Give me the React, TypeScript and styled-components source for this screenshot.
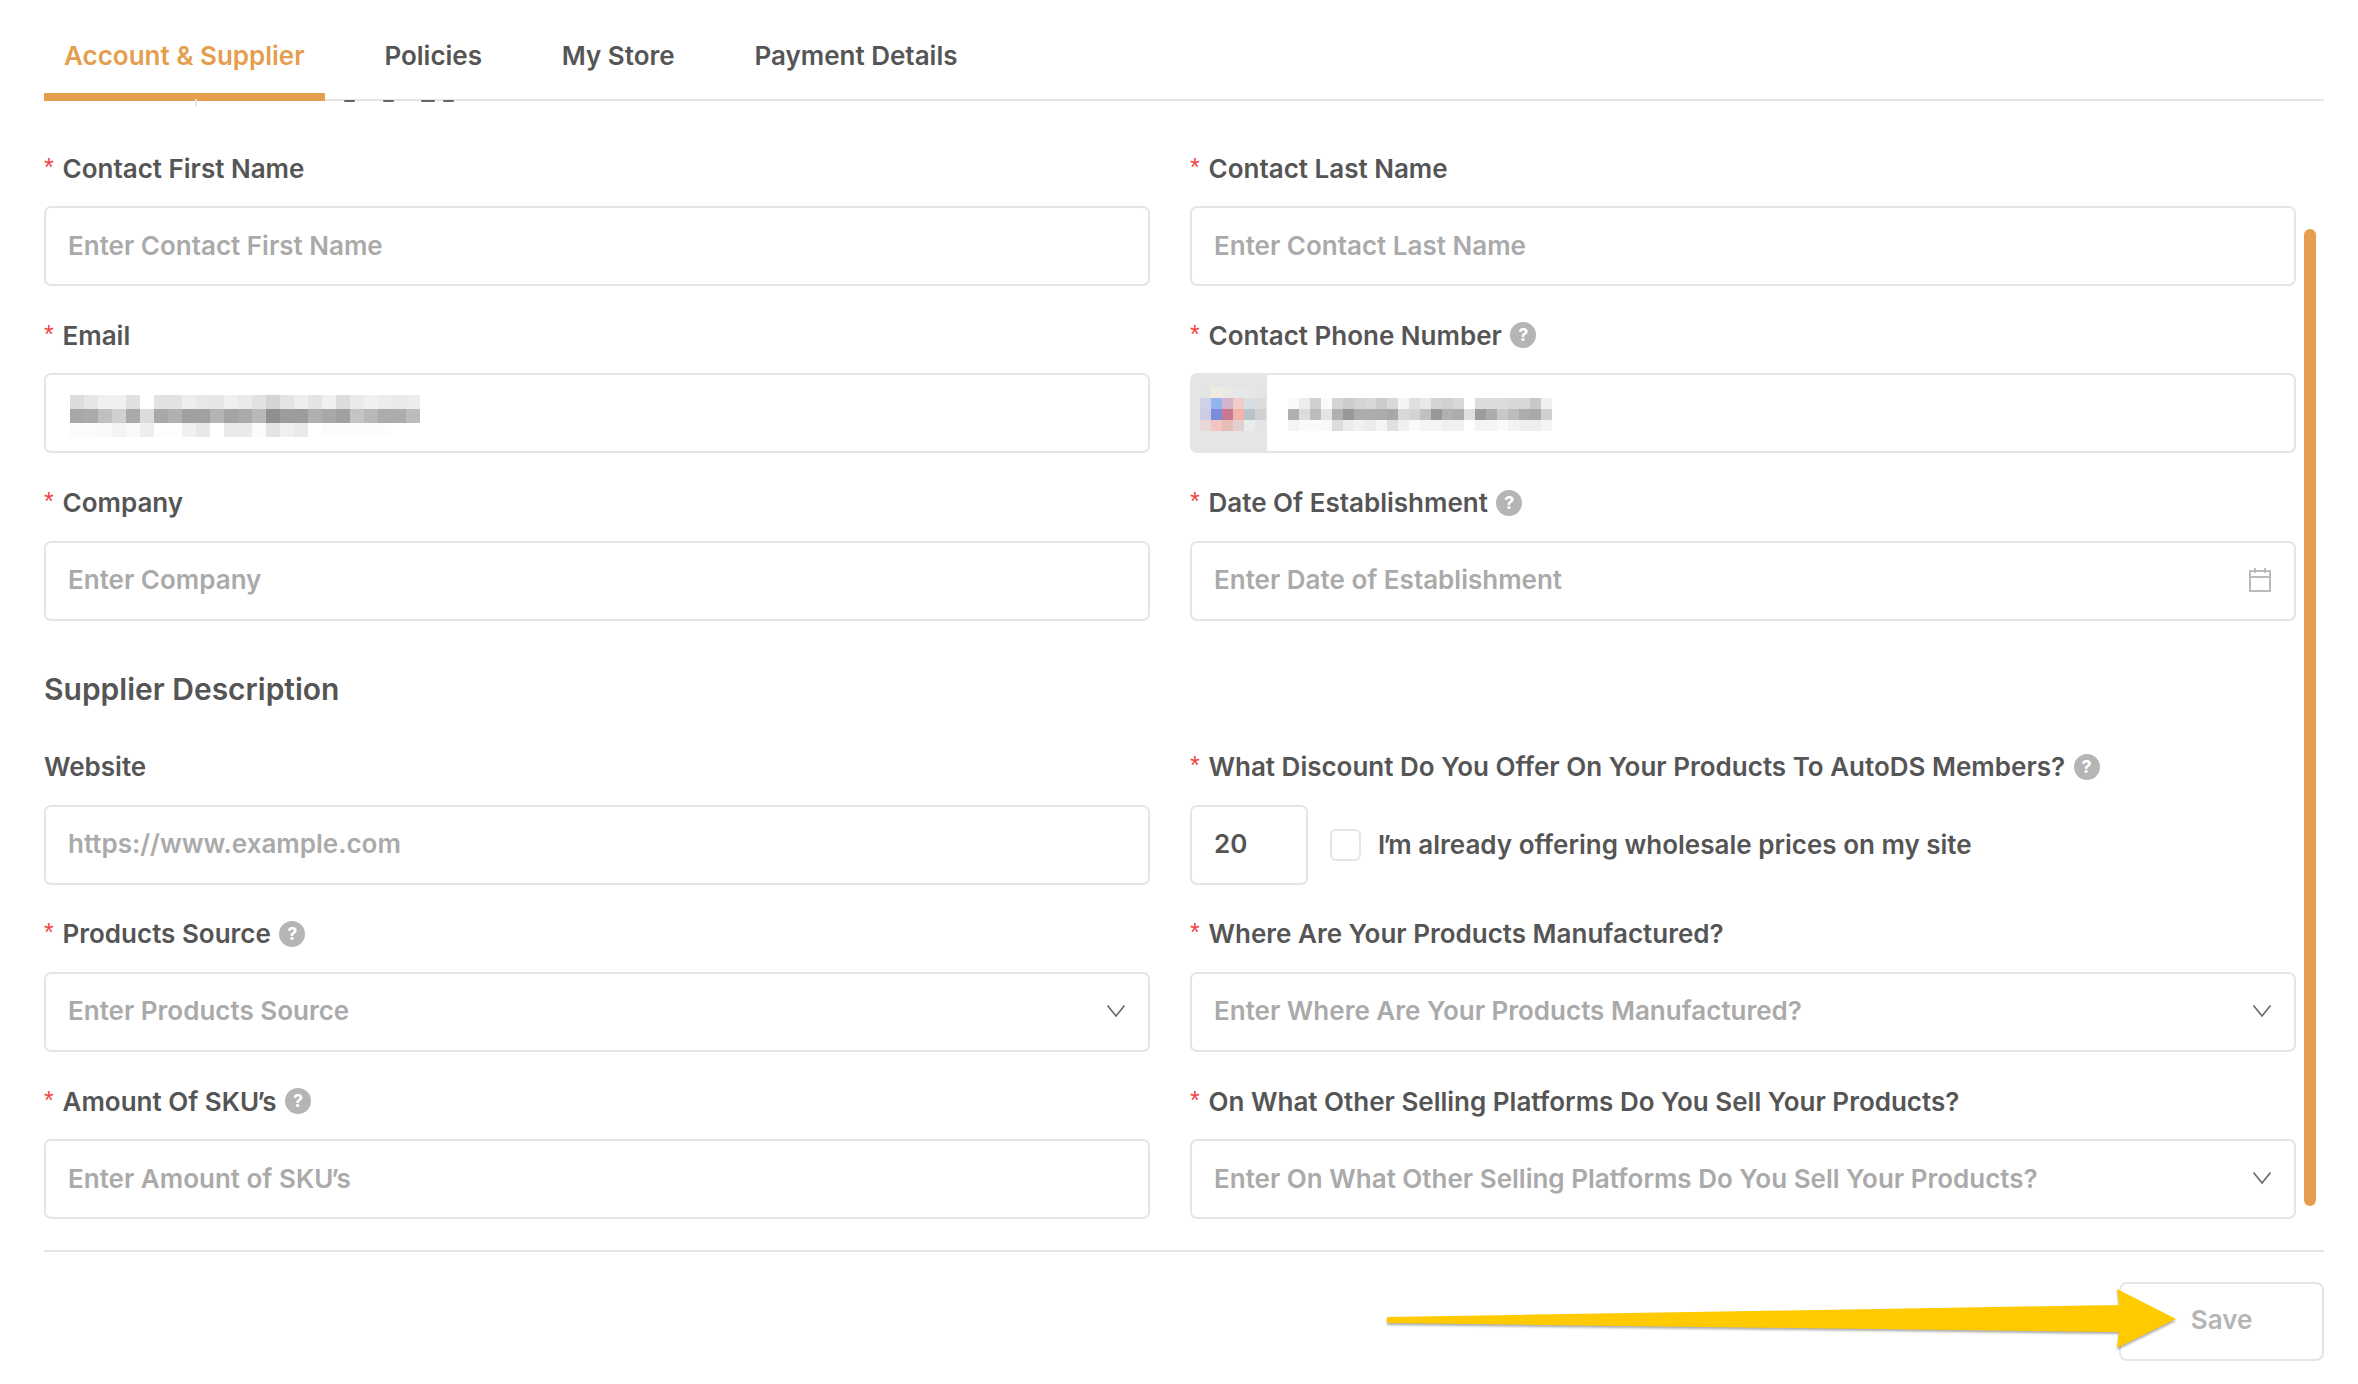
import React from "react";
import styled, { createGlobalStyle } from "styled-components";

const Global = createGlobalStyle`
  html, body { margin: 0; padding: 0; background: #fff; }
  body { font-family: Inter, "Liberation Sans", sans-serif; overflow: hidden; }
  * { box-sizing: border-box; }
`;

const Page = styled.div`
  position: relative;
  width: 2358px;
  height: 1384px;
  padding: 0 34px 0 44px;
  overflow: hidden;
`;

const Tabs = styled.nav`
  position: relative;
  display: flex;
  gap: 39.8px;
  height: 101px;
  border-bottom: 2px solid #e5e5e5;
`;

const Tab = styled.div<{ $active?: boolean }>`
  height: 101px;
  padding: 36px 20px 0;
  font-size: 26px;
  line-height: 40px;
  font-weight: 600;
  color: ${(p) => (p.$active ? "#e49e4d" : "#555")};
  border-bottom: ${(p) => (p.$active ? "8px solid #e49e4d" : "none")};
`;

const ScrollPeek = styled.svg`
  position: absolute;
  left: 0;
  top: 99px;
`;

const FormArea = styled.div`
  position: relative;
  padding-top: 47px;
`;

const Grid = styled.div`
  display: grid;
  grid-template-columns: 1105.5px 1106px;
  column-gap: 40.5px;
  row-gap: 29.25px;
`;

const SectionTitle = styled.h2`
  grid-column: 1 / -1;
  margin: 10px 0 0;
  height: 57.5px;
  font-size: 30px;
  line-height: 58px;
  font-weight: 600;
  color: #555;
`;

const Field = styled.div`
  display: flex;
  flex-direction: column;
  min-width: 0;
`;

const Label = styled.label`
  display: flex;
  align-items: center;
  height: 40px;
  margin-bottom: 18px;
  font-size: 26px;
  font-weight: 600;
  color: #555;
  white-space: pre;
`;

const Star = styled.span`
  width: 18.5px;
  margin-top: -2px;
  font-family: "Liberation Sans", sans-serif;
  font-size: 25px;
  font-weight: 400;
  color: #ee4444;
`;

const Help = styled.span`
  display: inline-flex;
  align-items: center;
  justify-content: center;
  width: 26px;
  height: 26px;
  margin-left: 8.5px;
  border-radius: 50%;
  background: #b5b5b5;
  color: #fff;
  font-size: 18px;
  font-weight: 700;
  line-height: 1;
`;

const TightMark = styled.span`
  margin-left: -2px;
  letter-spacing: -2.5px;
`;

const boxStyle = `
  height: 80px;
  border: 2px solid #e5e5e5;
  border-radius: 7px;
  background: #fff;
`;

const TextInput = styled.input`
  ${boxStyle}
  width: 100%;
  padding: 0 22px 2px;
  font-family: inherit;
  font-size: 26px;
  font-weight: 600;
  color: #555;
  outline: none;
  &::placeholder { color: #aaa; opacity: 1; }
`;

const Box = styled.div`
  ${boxStyle}
  display: flex;
  align-items: center;
  justify-content: space-between;
  padding: 0 22px 2px;
  font-size: 26px;
  font-weight: 600;
  color: #aaa;
  white-space: nowrap;
`;

const PlaceholderText = styled.span`
  white-space: pre;
`;

const MaskedBox = styled(Box)`
  justify-content: flex-start;
  padding: 6px 0 0 24px;
`;

const PhoneBox = styled(Box)`
  justify-content: flex-start;
  align-items: stretch;
  padding: 0;
  overflow: hidden;
`;

const FlagCell = styled.div`
  display: flex;
  align-items: center;
  width: 75px;
  padding: 0 0 8px 8px;
  background: #e5e5e5;
`;

const PhoneNumber = styled.div`
  display: flex;
  align-items: center;
  padding: 3px 0 0 21px;
`;

const DiscountRow = styled.div`
  display: flex;
  align-items: center;
`;

const DiscountInput = styled(TextInput)`
  width: 118px;
  flex: none;
`;

const Check = styled.span`
  width: 31px;
  height: 32px;
  margin: 1px 17px 0 22px;
  border: 2px solid #e5e5e5;
  border-radius: 6px;
`;

const CheckText = styled.span`
  font-size: 26px;
  font-weight: 600;
  color: #555;
  white-space: nowrap;
`;

const Thumb = styled.div`
  position: absolute;
  left: 2260px;
  top: 128px;
  width: 12px;
  height: 977px;
  border-radius: 6px;
  background: #e49e4d;
`;

const Footer = styled.footer`
  display: flex;
  justify-content: flex-end;
  margin-top: 30.5px;
  padding-top: 30px;
  border-top: 2px solid #e5e5e5;
`;

const SaveButton = styled.button`
  width: 205px;
  height: 79px;
  padding-bottom: 4px;
  border: 2px solid #e5e5e5;
  border-radius: 8px;
  background: #fff;
  font-family: inherit;
  font-size: 26px;
  font-weight: 600;
  color: #b5b5b5;
`;

const ArrowOverlay = styled.svg`
  position: absolute;
  left: 0;
  top: 0;
  pointer-events: none;
  filter: drop-shadow(0 2px 1px rgba(70, 70, 70, 0.45));
`;

const Calendar = () => (
  <svg width="24" height="26" viewBox="0 0 24 26" fill="none" stroke="#bbb" strokeWidth="2">
    <path d="M2 4h20v20H2zM2 10h20M7 1v5M17 1v5" />
  </svg>
);

const Chevron = () => (
  <svg width="20" height="14" viewBox="0 0 20 14" fill="none" stroke="#666" strokeWidth="1.6">
    <path d="M1.500 1.500l8.500 10.500 8.500-10.500" />
  </svg>
);

const Mosaic = ({ rows, w, h }: { rows: string[][]; w: number; h: number }) => (
  <svg width={rows[0].length * w} height={rows.length * h} shapeRendering="crispEdges" style={{ flex: "none" }}>
    {rows.map((r, y) => r.map((c, x) => <rect key={x} x={x * w} y={y * h} width={w} height={h} fill={`#${c}`} />))}
  </svg>
);

const split = (s: string) => s.split(" ");

const emailRows = [
  "dcdcdc e6e6e6 f0f0f0 f0f0f0 e0e0e0 ffffff e2e2e2 e2e2e2 eeeeee e8e8e8 e6e6e6 f0f0f0 eaeaea e2e2e2 d4d4d4 e4e4e4 eeeeee e4e4e4 f0f0f0 dcdcdc eaeaea f0f0f0 ececec eaeaea ececec",
  "a8a8a8 aaaaaa c0c0c0 d0d0d0 aaaaaa dcdcdc a8a8a8 b0b0b0 a0a0a0 a0a0a0 b4b4b4 a4a4a4 aaaaaa b8b8b8 909090 9c9c9c 9c9c9c b0b0b0 a8a8a8 a0a0a0 c4c4c4 b8b8b8 acacac acacac bcbcbc",
  "fbfbfb fbfbfb f9f9f9 f4f4f2 f9f9f9 eeeeee fdfdfd fdfdfd f0f0f0 e8e8e8 ffffff eaeaea eaeaea fbfbfb e4e4e4 eef0f0 eaeaea ffffff fcfcfc fcfcfc fcfcfc fcfcfc fdfdfd ffffff ffffff",
].map(split);

const flagRows = [
  "e4e4e2 f0ebe0 eaeae4 e4e8e8 e6e8e8 e4e4e4",
  "cdd2e8 94b4ee d4b4cc eeccc8 d8dee2 dcdcdc",
  "ccccE4 7c8cdc c87890 f0b4ac b8c4c8 d0d0d0",
  "e8d8d8 f4c4c0 e4bcb8 e0d0d0 e8ecec e4e4e4",
].map(split);

const phoneRows = [
  "fafafa ececec d0d0d0 fafafa d4d4d4 cccccc d4d4d4 d8d8d8 cccccc d8d8d8 f4f4f4 e0e0e0 e8e8e8 d4d4d4 d0d0d0 d8d8d8 ffffff dcdcdc dcdcdc dcdcdc d8d8d8 d8d8d8 c8c8c8 f0f0f0",
  "b0b0b0 dcdcdc bcbcbc e4e4e4 b0b0b0 989898 acacac acacac acacac a8a8a8 d8d8d8 d4d4d4 c0c0c0 989898 b0b0b0 acacac e0e0e0 9c9c9c acacac c8c8c8 bcbcbc acacac a8a8a8 d0d0d0",
  "f4f4f4 fafafa fafafa f8f8f8 dcdcdc ececec f0f0f0 ececec f4f4f4 e0e0e0 f0f0f0 fafafa f4f4f4 f4f4f4 f0f0f0 f0f0f0 ffffff f4f4f4 f4f4f4 fafafa f2f2f2 eeeeee eeeeee f4f4f4",
].map(split);

const FieldLabel = ({ text, required = true, help }: { text: React.ReactNode; required?: boolean; help?: boolean }) => (
  <Label>
    {required && <Star>*</Star>}
    <span>{text}</span>
    {help && <Help>?</Help>}
  </Label>
);

export default function App() {
  return (
    <Page>
      <Global />
      <Tabs>
        <Tab $active>Account &amp; Supplier</Tab>
        <Tab>Policies</Tab>
        <Tab>My Store</Tab>
        <Tab>Payment Details</Tab>
        <ScrollPeek width="420" height="8" viewBox="0 0 420 8">
          <path d="M151 0h2v7h-2z" fill="#e5e5e5" />
          <path d="M301 2h9M340 2h9M378 2h12M400 2h9" stroke="#666" strokeWidth="2" strokeLinecap="round" />
        </ScrollPeek>
      </Tabs>
      <FormArea>
        <Grid>
          <Field>
            <FieldLabel text="Contact First Name" />
            <TextInput placeholder="Enter Contact First Name" />
          </Field>
          <Field>
            <FieldLabel text="Contact Last Name" />
            <TextInput placeholder="Enter Contact Last Name" />
          </Field>
          <Field>
            <FieldLabel text="Email" />
            <MaskedBox>
              <Mosaic rows={emailRows} w={14} h={14} />
            </MaskedBox>
          </Field>
          <Field>
            <FieldLabel text="Contact Phone Number" help />
            <PhoneBox>
              <FlagCell>
                <Mosaic rows={flagRows} w={11} h={11} />
              </FlagCell>
              <PhoneNumber>
                <Mosaic rows={phoneRows} w={11} h={11} />
              </PhoneNumber>
            </PhoneBox>
          </Field>
          <Field>
            <FieldLabel text="Company" />
            <TextInput placeholder="Enter Company" />
          </Field>
          <Field>
            <FieldLabel text="Date Of Establishment" help />
            <Box>
              Enter Date of Establishment
              <Calendar />
            </Box>
          </Field>
          <SectionTitle>Supplier Description</SectionTitle>
          <Field>
            <FieldLabel text="Website" required={false} />
            <TextInput placeholder="https://www.example.com" />
          </Field>
          <Field>
            <FieldLabel text="What Discount Do You Offer On Your Products To AutoDS Members?" help />
            <DiscountRow>
              <DiscountInput defaultValue="20" />
              <Check />
              <CheckText>
                I<TightMark>’</TightMark>m already offering wholesale prices on my site
              </CheckText>
            </DiscountRow>
          </Field>
          <Field>
            <FieldLabel text="Products Source" help />
            <Box>
              Enter Products Source
              <Chevron />
            </Box>
          </Field>
          <Field>
            <FieldLabel text="Where Are Your Products Manufactured?" />
            <Box>
              Enter Where Are Your Products Manufactured?
              <Chevron />
            </Box>
          </Field>
          <Field>
            <FieldLabel
              text={
                <>
                  Amount Of SKU<TightMark>’</TightMark>s
                </>
              }
              help
            />
            <Box>
              <PlaceholderText>
                Enter Amount of SKU<TightMark>’</TightMark>s
              </PlaceholderText>
            </Box>
          </Field>
          <Field>
            <FieldLabel text="On What Other Selling Platforms Do You Sell Your Products?" />
            <Box>
              Enter On What Other Selling Platforms Do You Sell Your Products?
              <Chevron />
            </Box>
          </Field>
        </Grid>
        <Thumb />
      </FormArea>
      <Footer>
        <SaveButton>Save</SaveButton>
      </Footer>
      <ArrowOverlay width="2358" height="1384" viewBox="0 0 2358 1384">
        <path d="M1387 1317L2119 1305L2117 1289L2176 1319L2117 1348L2119 1332L1387 1323Z" fill="#ffcb00" />
      </ArrowOverlay>
    </Page>
  );
}
